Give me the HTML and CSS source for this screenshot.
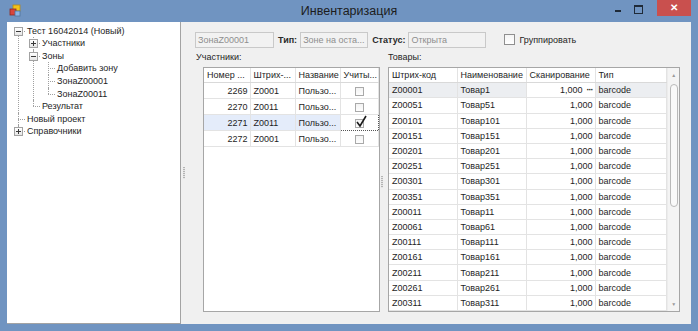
FILE: index.html
```html
<!DOCTYPE html>
<html lang="ru">
<head>
    <meta charset="UTF-8">
    <title>Инвентаризация</title>
    <link rel="stylesheet" href="styles.css">
</head>
<body>
    <div class="window">
        <div class="titlebar">
            <div class="title-left">
                <svg class="app-icon" width="12" height="13" viewBox="0 0 12 13">
                    <rect x="4" y="1" width="7" height="6" fill="#f2c21b" stroke="#b88a12" stroke-width="0.8"/>
                    <rect x="1" y="5" width="6" height="6" fill="#d9463c" stroke="#8f2a22" stroke-width="0.8"/>
                    <rect x="6" y="7" width="5" height="5" fill="#8cb6e6" stroke="#51739c" stroke-width="0.8"/>
                </svg>
            </div>
            <div class="title">Инвентаризация</div>
            <div class="win-controls">
                <span class="wc wc-min"></span>
                <span class="wc wc-max"></span>
                <span class="wc wc-close">✕</span>
            </div>
        </div>

        <div class="client">
            <div class="tree-panel">
                <ul class="tree">
                    <li><span class="toggle"></span>Тест 16042014 (Новый)
                        <ul>
                            <li><span class="toggle plus"></span>Участники</li>
                            <li><span class="toggle"></span>Зоны
                                <ul>
                                    <li>Добавить зону</li>
                                    <li>ЗонаZ00001</li>
                                    <li>ЗонаZ00011</li>
                                </ul>
                            </li>
                            <li>Результат</li>
                        </ul>
                    </li>
                    <li>Новый проект</li>
                    <li><span class="toggle plus"></span>Справочники</li>
                </ul>
            </div>

            <div class="splitter"><span class="grip"></span></div>

            <div class="main">
                <div class="top-row">
                    <div class="field field-zone">ЗонаZ00001</div>
                    <span class="lbl">Тип:</span>
                    <div class="field field-type">Зоне на оста...</div>
                    <span class="lbl">Статус:</span>
                    <div class="field field-status">Открыта</div>
                    <label class="group-check"><span class="box"></span>Группировать</label>
                </div>

                <div class="panes">
                    <div class="pane pane-users">
                        <div class="pane-label">Участники:</div>
                        <div class="grid grid-users">
                            <table>
                                <colgroup>
                                    <col style="width:46px"><col style="width:45px"><col style="width:45px"><col style="width:38px"><col>
                                </colgroup>
                                <thead>
                                    <tr><th>Номер ...</th><th>Штрих-...</th><th>Название</th><th>Учиты...</th><th class="blank"></th></tr>
                                </thead>
                                <tbody>
                                    <tr><td class="num">2269</td><td>Z0001</td><td>Пользо...</td><td class="chk"><span class="cb"></span></td><td class="blank"></td></tr>
                                    <tr><td class="num">2270</td><td>Z0011</td><td>Пользо...</td><td class="chk"><span class="cb"></span></td><td class="blank"></td></tr>
                                    <tr class="sel"><td class="num">2271</td><td>Z0011</td><td>Пользо...</td><td class="chk focus"><span class="cb checked"><svg width="14" height="13" viewBox="0 0 14 13"><path d="M3 7 L6 11 L12 1" fill="none" stroke="#1a1a1a" stroke-width="1.6"/></svg></span></td><td class="blank"></td></tr>
                                    <tr><td class="num">2272</td><td>Z0001</td><td>Пользо...</td><td class="chk"><span class="cb"></span></td><td class="blank"></td></tr>
                                </tbody>
                            </table>
                        </div>
                    </div>

                    <div class="splitter splitter-v"><span class="grip"></span></div>

                    <div class="pane pane-goods">
                        <div class="pane-label">Товары:</div>
                        <div class="grid grid-goods">
                            <table>
                                <colgroup>
                                    <col style="width:68px"><col style="width:69px"><col style="width:69px"><col>
                                </colgroup>
                                <thead>
                                    <tr><th>Штрих-код</th><th>Наименование</th><th>Сканирование</th><th>Тип</th></tr>
                                </thead>
                                <tbody id="goods"></tbody>
                            </table>
                            <div class="vscroll">
                                <span class="arrow">▲</span>
                                <div class="track"><span class="thumb"></span></div>
                                <span class="arrow">▼</span>
                            </div>
                        </div>
                    </div>
                </div>
            </div>
        </div>
    </div>

    <script>
        const goods = ['00001', '00051', '00101', '00151', '00201', '00251', '00301', '00351',
                       '00011', '00061', '00111', '00161', '00211', '00261', '00311'];
        const body = document.getElementById('goods');
        goods.forEach((code, i) => {
            const n = parseInt(code, 10);
            const tr = document.createElement('tr');
            if (i === 0) tr.className = 'cur';
            tr.innerHTML = `
                <td>Z${code}</td>
                <td>Товар${n}</td>
                <td class="num${i === 0 ? ' edit' : ''}">1,000${i === 0 ? '<span class="dots">···</span>' : ''}</td>
                <td>barcode</td>`;
            body.appendChild(tr);
        });
    </script>
</body>
</html>
```

FILE: styles.css
```css
* {
    margin: 0;
    padding: 0;
    box-sizing: border-box;
}

body {
    font-family: 'Liberation Sans', Arial, sans-serif;
    font-size: 9px;
    color: #1e1e1e;
    background: #6f93c0;
    width: 698px;
    height: 331px;
    overflow: hidden;
}

.window {
    height: 331px;
    display: flex;
    flex-direction: column;
    background: #7094c1;
}

/* title bar */
.titlebar {
    height: 24px;
    display: grid;
    grid-template-columns: 1fr auto 1fr;
    align-items: center;
}

.title-left {
    padding-left: 9px;
    display: flex;
    align-items: center;
}

.title {
    font-size: 12.5px;
    color: #1c1c1c;
    padding-top: 1px;
}

.win-controls {
    align-self: start;
    justify-self: end;
    display: flex;
    margin-right: 7px;
    height: 16px;
}

.wc {
    width: 20px;
    height: 16px;
    position: relative;
}

.wc-min::after {
    content: "";
    position: absolute;
    left: 4px;
    top: 10px;
    width: 6px;
    height: 2px;
    background: #1f2a38;
}

.wc-max {
    margin-right: 6px;
}

.wc-max::after {
    content: "";
    position: absolute;
    left: 3px;
    top: 5px;
    width: 7px;
    height: 6px;
    border: 1px solid #1f2a38;
    border-top-width: 2px;
}

.wc-close {
    width: 34px;
    background: #c9504e;
    color: #fff;
    font-size: 10px;
    font-weight: bold;
    text-align: center;
    line-height: 16px;
}

/* client area */
.client {
    flex: 1;
    margin: 0 7px 7px;
    display: flex;
    background: #f0f0f0;
}

.tree-panel {
    width: 174px;
    background: #fff;
    border-right: 1px solid #a3a3a3;
    border-bottom: 1px solid #a3a3a3;
}

.tree, .tree ul {
    list-style: none;
}

.tree {
    padding: 3px 0 0 5px;
}

.tree li {
    position: relative;
    padding-left: 15px;
    line-height: 12.6px;
    white-space: nowrap;
}

.tree li::before {
    content: "";
    position: absolute;
    left: 6px;
    top: 0;
    bottom: 0;
    border-left: 1px dotted #a0a0a0;
}

.tree li:last-child::before {
    bottom: auto;
    height: 6px;
}

.tree > li:first-child::before {
    top: 6px;
}

.tree li::after {
    content: "";
    position: absolute;
    left: 6px;
    top: 6px;
    width: 7px;
    border-top: 1px dotted #a0a0a0;
}

.toggle {
    position: absolute;
    left: 2px;
    top: 2px;
    width: 9px;
    height: 9px;
    border: 1px solid #a2a2a2;
    background: linear-gradient(#ffffff, #e6e6e6);
    z-index: 1;
}

.toggle::before {
    content: "";
    position: absolute;
    left: 1px;
    top: 3px;
    width: 5px;
    height: 1px;
    background: #3a3a3a;
}

.toggle.plus::after {
    content: "";
    position: absolute;
    left: 3px;
    top: 1px;
    width: 1px;
    height: 5px;
    background: #3a3a3a;
}

/* splitters */
.splitter {
    width: 6px;
    display: flex;
    align-items: center;
    justify-content: center;
}

.grip {
    width: 2px;
    height: 12px;
    background: repeating-linear-gradient(#b4b4b4 0 1px, #e6e6e6 1px 2px);
}

.splitter-v {
    width: 8px;
    justify-content: flex-start;
    padding-left: 1px;
}

/* main area */
.main {
    flex: 1;
    display: flex;
    flex-direction: column;
    padding-top: 10px;
}

.top-row {
    height: 16px;
    display: flex;
    align-items: center;
    padding-left: 8px;
}

.field {
    height: 16px;
    line-height: 14px;
    padding: 0 2px;
    border: 1px solid #c9c9c9;
    background: #f2f2f2;
    color: #8e8e8e;
    white-space: nowrap;
    overflow: hidden;
}

.field-zone {
    width: 79px;
}

.field-type {
    width: 68px;
}

.field-status {
    width: 78px;
}

.lbl {
    margin: 0 3px 0 4px;
    font-weight: bold;
    color: #2a2a2a;
}

.group-check {
    display: flex;
    align-items: center;
    margin-left: 18px;
}

.box {
    width: 11px;
    height: 11px;
    border: 1px solid #8f8f8f;
    background: linear-gradient(#f4f4f4, #ffffff);
    margin-right: 4px;
}

.panes {
    flex: 1;
    display: flex;
    margin-top: 4px;
    padding-bottom: 12px;
}

.pane {
    display: flex;
    flex-direction: column;
}

.pane-label {
    height: 11px;
    line-height: 11px;
    margin-bottom: 4px;
}

.pane-users {
    width: 193px;
}

.pane-users .pane-label {
    padding-left: 9px;
}

.pane-goods {
    flex: 1;
    padding-right: 11px;
}

/* grids */
.grid {
    flex: 1;
    background: #fff;
    border: 1px solid #a6a6a6;
    overflow: hidden;
}

.grid-users {
    margin-left: 16px;
}

.grid-goods {
    display: flex;
}

table {
    border-collapse: collapse;
    table-layout: fixed;
    width: 100%;
    align-self: flex-start;
}

th {
    height: 15px;
    font-weight: normal;
    text-align: left;
    padding: 0 3px;
    border-right: 1px solid #e3e3e3;
    border-bottom: 1px solid #d9d9d9;
    white-space: nowrap;
    overflow: hidden;
    color: #262626;
}

td {
    padding: 0 3px;
    border-right: 1px solid #e3e3e3;
    border-bottom: 1px solid #e3e3e3;
    white-space: nowrap;
    overflow: hidden;
}

.grid-users td {
    height: 16px;
}

.grid-goods td {
    height: 15.2px;
}

td.num {
    text-align: right;
    padding-right: 2px;
}

th.blank, td.blank {
    border: none;
}

td.chk {
    text-align: center;
}

.cb {
    display: inline-block;
    width: 9px;
    height: 9px;
    border: 1px solid #a9a9a9;
    background: linear-gradient(#f3f3f3, #fdfdfd);
    vertical-align: middle;
    position: relative;
}

.cb svg {
    position: absolute;
    left: -2px;
    top: -5px;
}

.sel td {
    background: #e4ecfa;
}

.sel td.focus {
    background: #fff;
    border: 1px dotted #555;
}

.cur td {
    background: #eceef1;
}

.cur td.edit {
    background: #fff;
}

.dots {
    margin-left: 4px;
    letter-spacing: -1px;
    font-weight: bold;
}

/* scrollbar */
.vscroll {
    width: 12px;
    display: flex;
    flex-direction: column;
    align-items: center;
    background: #f4f4f4;
    border-left: 1px solid #ececec;
}

.arrow {
    font-size: 5px;
    color: #9a9a9a;
    height: 14px;
    line-height: 14px;
}

.track {
    flex: 1;
    width: 100%;
    display: flex;
    justify-content: center;
}

.thumb {
    width: 8px;
    height: 123px;
    margin-top: 2px;
    border: 1px solid #b9b9b9;
    border-radius: 4px;
    background: #f9f9f9;
}
```
